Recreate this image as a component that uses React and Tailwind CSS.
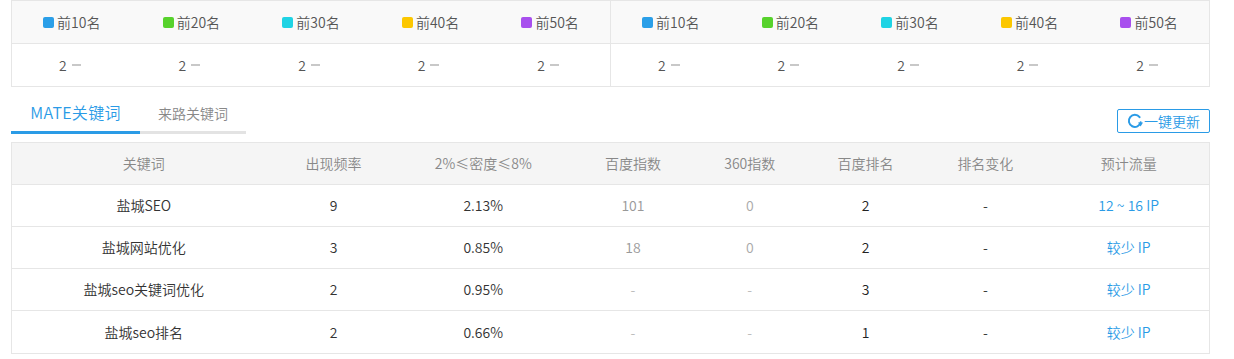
import React from "react";

const ranks = [
  { label: "前10名", color: "bg-[#2b9fe8]" },
  { label: "前20名", color: "bg-[#57d22c]" },
  { label: "前30名", color: "bg-[#1fd3e4]" },
  { label: "前40名", color: "bg-[#fcc700]" },
  { label: "前50名", color: "bg-[#a84fee]" },
];

const rows = [
  { kw: "盐城SEO", freq: "9", density: "2.13%", baidu: "101", s360: "0", rank: "2", change: "-", flow: "12 ~ 16 IP" },
  { kw: "盐城网站优化", freq: "3", density: "0.85%", baidu: "18", s360: "0", rank: "2", change: "-", flow: "较少 IP" },
  { kw: "盐城seo关键词优化", freq: "2", density: "0.95%", baidu: "-", s360: "-", rank: "3", change: "-", flow: "较少 IP" },
  { kw: "盐城seo排名", freq: "2", density: "0.66%", baidu: "-", s360: "-", rank: "1", change: "-", flow: "较少 IP" },
];

const cols = [
  { title: "关键词", w: "w-[264px]" },
  { title: "出现频率", w: "w-[116px]" },
  { title: "2%≤密度≤8%", w: "w-[184px]" },
  { title: "百度指数", w: "w-[116px]" },
  { title: "360指数", w: "w-[118px]" },
  { title: "百度排名", w: "w-[114px]" },
  { title: "排名变化", w: "w-[126px]" },
  { title: "预计流量", w: "w-[161px]" },
];

const RankHalf = ({ last }) => (
  <div className={`flex-1 ${last ? "" : "border-r border-[#e6e6e6]"}`}>
    <div className="flex h-[43px] bg-[#f9f9f9] border-b border-[#e6e6e6]">
      {ranks.map((r) => (
        <div key={r.label} className="flex-1 flex items-center justify-center text-[14px] text-[#555]">
          <span className={`w-[11px] h-[11px] rounded-[2px] mr-[3px] ${r.color}`} />
          {r.label}
        </div>
      ))}
    </div>
    <div className="flex h-[42px]">
      {ranks.map((r) => (
        <div key={r.label} className="flex-1 flex items-center justify-center text-[14px] text-[#555] pr-[4px]">
          2
          <span className="ml-[5px] w-[9px] h-[2px] bg-[#c8c8c8]" />
        </div>
      ))}
    </div>
  </div>
);

const RefreshIcon = () => (
  <svg width="16" height="16" viewBox="0 0 16 16" fill="none">
    <path d="M13.7 9.2A6 6 0 1 1 12.6 4.2" stroke="#2a9be6" strokeWidth="2" strokeLinecap="round" />
    <path d="M11 9.4L13.6 13.4L16 9.4Z" fill="#2a9be6" />
  </svg>
);

export default function App() {
  return (
    <div
      className="bg-white w-[1234px] h-[359px] overflow-hidden pl-[11px] font-[350]"
      style={{ fontFamily: '"Noto Sans CJK SC", "Noto Sans", sans-serif' }}
    >
      {/* rank summary */}
      <div className="w-[1199px] flex border border-[#e6e6e6]">
        <RankHalf />
        <RankHalf last />
      </div>

      {/* tabs */}
      <div className="w-[1199px] mt-[9px] flex items-end justify-between">
        <div className="flex">
          <div className="w-[129px] h-[38px] flex items-center justify-center pb-[3px] border-b-[3px] border-[#2a9be6] text-[16px] text-[#2a9be6] tracking-[0.3px]">
            MATE关键词
          </div>
          <div className="w-[106px] h-[38px] flex items-center justify-center pb-[1px] border-b-[3px] border-[#e3e3e3] text-[14px] text-[#888]">
            来路关键词
          </div>
        </div>
        <button className="mb-[1px] w-[93px] h-[24px] flex items-center justify-center gap-[1px] border border-[#2a9be6] rounded-[2px] text-[14px] text-[#2a9be6] bg-white">
          <RefreshIcon />
          一键更新
        </button>
      </div>

      {/* keyword table */}
      <div className="w-[1199px] mt-[8px] border border-[#e6e6e6] text-[14px]">
        <div className="flex h-[42px] bg-[#f5f5f5] border-b border-[#e6e6e6] text-[#888]">
          {cols.map((c) => (
            <div key={c.title} className={`${c.w} flex items-center justify-center`}>
              {c.title}
            </div>
          ))}
        </div>
        {rows.map((r, i) => (
          <div key={r.kw} className={`flex h-[42px] ${i < rows.length - 1 ? "border-b border-[#e6e6e6]" : ""}`}>
            <div className="w-[264px] flex items-center justify-center text-[#333]">{r.kw}</div>
            <div className="w-[116px] flex items-center justify-center text-[#333]">{r.freq}</div>
            <div className="w-[184px] flex items-center justify-center text-[#333]">{r.density}</div>
            <div className={`w-[116px] flex items-center justify-center ${r.baidu === "-" ? "text-[#bbb]" : "text-[#999]"}`}>{r.baidu}</div>
            <div className={`w-[118px] flex items-center justify-center ${r.s360 === "-" ? "text-[#bbb]" : "text-[#aaa]"}`}>{r.s360}</div>
            <div className="w-[114px] flex items-center justify-center text-[#222]">{r.rank}</div>
            <div className="w-[126px] flex items-center justify-center text-[#333]">{r.change}</div>
            <div className="w-[161px] flex items-center justify-center text-[#2a9be6]">{r.flow}</div>
          </div>
        ))}
      </div>
    </div>
  );
}
